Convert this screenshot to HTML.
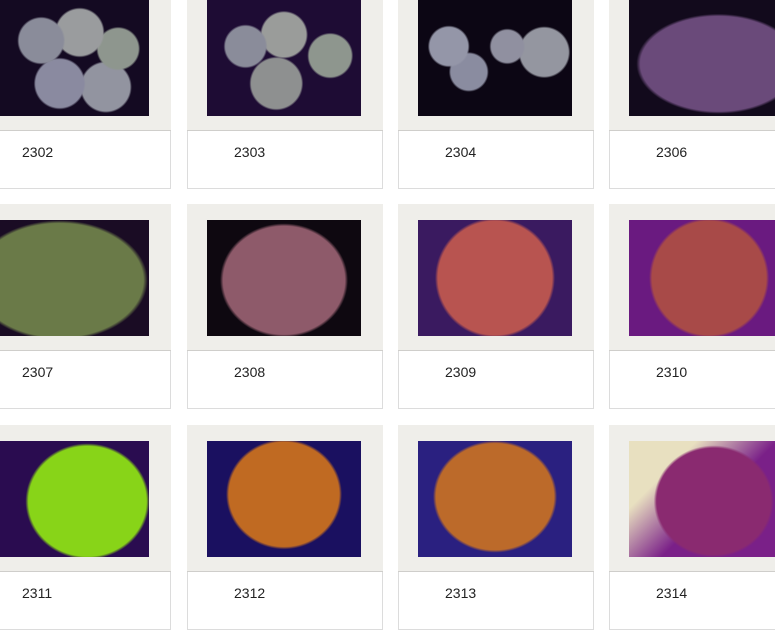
<!DOCTYPE html>
<html><head><meta charset="utf-8"><style>
*{margin:0;padding:0;box-sizing:border-box}
body{width:775px;height:625px;overflow:hidden;background:#fff;position:relative;font-family:"Liberation Sans",Arial,sans-serif}
.card{position:absolute;width:196px;height:205px}
.frame{position:absolute;left:0;top:0;width:196px;height:147px;background:#efeeea;border-bottom:1px solid #cfcecb}
.img{position:absolute;left:20px;top:16px;width:154px;height:116px;overflow:hidden}
.lab{position:absolute;left:0;top:147px;width:196px;height:58px;border:1px solid #dcdcdc;border-top:none;background:#fff}
.lab span{position:absolute;left:46px;top:13px;font-size:14px;color:#222}
</style></head><body>
<div class="card" style="left:-25px;top:-16px"><div class="frame"><div class="img" style="background:radial-gradient(circle at 30% 35%,#8a8c9a 0 22px,transparent 24px),radial-gradient(circle at 55% 28%,#9a9c9e 0 23px,transparent 25px),radial-gradient(circle at 80% 42%,#8e968e 0 20px,transparent 22px),radial-gradient(circle at 42% 72%,#8a8aa0 0 24px,transparent 26px),radial-gradient(circle at 72% 75%,#9294a0 0 24px,transparent 26px),#140a22"></div></div><div class="lab"><span>2302</span></div></div>
<div class="card" style="left:187px;top:-16px"><div class="frame"><div class="img" style="background:radial-gradient(circle at 25% 40%,#8a8c9a 0 20px,transparent 22px),radial-gradient(circle at 50% 30%,#9a9c9a 0 22px,transparent 24px),radial-gradient(circle at 80% 48%,#8e968e 0 21px,transparent 23px),radial-gradient(circle at 45% 72%,#8e9090 0 25px,transparent 27px),#1e0c34"></div></div><div class="lab"><span>2303</span></div></div>
<div class="card" style="left:398px;top:-16px"><div class="frame"><div class="img" style="background:radial-gradient(circle at 20% 40%,#9496a8 0 19px,transparent 21px),radial-gradient(circle at 33% 62%,#8a8ca0 0 18px,transparent 20px),radial-gradient(circle at 58% 40%,#9090a0 0 16px,transparent 18px),radial-gradient(circle at 82% 45%,#9496a0 0 24px,transparent 26px),#0c0614"></div></div><div class="lab"><span>2304</span></div></div>
<div class="card" style="left:609px;top:-16px"><div class="frame"><div class="img" style="background:radial-gradient(ellipse 82px 50px at 58% 55%,#6a4a7a 0 95%,transparent),#120a1c"></div></div><div class="lab"><span>2306</span></div></div>

<div class="card" style="left:-25px;top:204px"><div class="frame"><div class="img" style="background:radial-gradient(ellipse 88px 60px at 42% 52%,#6a7a48 0 95%,transparent),#1a0c24"></div></div><div class="lab"><span>2307</span></div></div>
<div class="card" style="left:187px;top:204px"><div class="frame"><div class="img" style="background:radial-gradient(ellipse 64px 57px at 50% 52%,#8e5a6a 0 95%,transparent),#0e0810"></div></div><div class="lab"><span>2308</span></div></div>
<div class="card" style="left:398px;top:204px"><div class="frame"><div class="img" style="background:radial-gradient(circle 60px at 50% 50%,#b85450 0 95%,transparent),#3a1a60"></div></div><div class="lab"><span>2309</span></div></div>
<div class="card" style="left:609px;top:204px"><div class="frame"><div class="img" style="background:radial-gradient(circle 60px at 52% 50%,#a84a48 0 95%,transparent),#6a1a80"></div></div><div class="lab"><span>2310</span></div></div>

<div class="card" style="left:-25px;top:425px"><div class="frame"><div class="img" style="background:radial-gradient(ellipse 62px 58px at 60% 52%,#88d418 0 95%,transparent),#2a0c50"></div></div><div class="lab"><span>2311</span></div></div>
<div class="card" style="left:187px;top:425px"><div class="frame"><div class="img" style="background:radial-gradient(ellipse 58px 55px at 50% 46%,#c06a22 0 95%,transparent),#1a1060"></div></div><div class="lab"><span>2312</span></div></div>
<div class="card" style="left:398px;top:425px"><div class="frame"><div class="img" style="background:radial-gradient(ellipse 62px 56px at 50% 48%,#bc6a2a 0 95%,transparent),#2a2080"></div></div><div class="lab"><span>2313</span></div></div>
<div class="card" style="left:609px;top:425px"><div class="frame"><div class="img" style="background:radial-gradient(ellipse 60px 56px at 55% 52%,#8a2a70 0 95%,transparent),linear-gradient(135deg,#e8e0c0 0 25%,#7a2088 55%)"></div></div><div class="lab"><span>2314</span></div></div>
</body></html>
